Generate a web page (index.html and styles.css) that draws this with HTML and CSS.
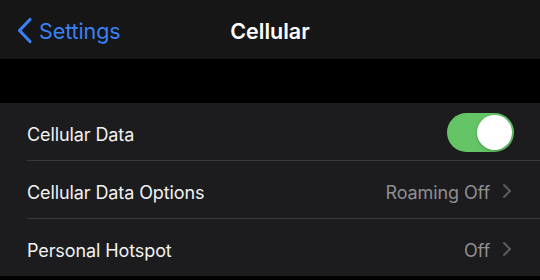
FILE: index.html
```html
<!DOCTYPE html>
<html>
<head>
<meta charset="utf-8">
<link rel="stylesheet" href="styles.css">
</head>
<body>
<div class="screen">
  <header class="nav">
    <div class="back">
      <svg class="back-chev" width="17" height="27" viewBox="0 0 17 27"><path d="M14 2.5 L3.5 13.5 L14 24.5" fill="none" stroke="#3a81f5" stroke-width="3.2" stroke-linecap="round" stroke-linejoin="round"/></svg>
      <span class="back-label">Settings</span>
    </div>
    <div class="title">Cellular</div>
    <div class="nav-right"></div>
  </header>
  <div class="gap"></div>
  <ul class="list">
    <li class="row">
      <div class="row-inner">
        <span class="label">Cellular Data</span>
        <span class="toggle"><span class="knob"></span></span>
      </div>
    </li>
    <li class="row">
      <div class="row-inner">
        <span class="label">Cellular Data Options</span>
        <span class="detail">Roaming Off<svg class="chev" width="10" height="16" viewBox="0 0 10 16"><path d="M2 2 L8 8 L2 14" fill="none" stroke="#5b5b60" stroke-width="2" stroke-linecap="round" stroke-linejoin="round"/></svg></span>
      </div>
    </li>
    <li class="row last">
      <div class="row-inner">
        <span class="label">Personal Hotspot</span>
        <span class="detail">Off<svg class="chev" width="10" height="16" viewBox="0 0 10 16"><path d="M2 2 L8 8 L2 14" fill="none" stroke="#5b5b60" stroke-width="2" stroke-linecap="round" stroke-linejoin="round"/></svg></span>
      </div>
    </li>
  </ul>
</div>
</body>
</html>
```
FILE: styles.css
```css
html, body {
  margin: 0;
  padding: 0;
  background: #000;
}
.screen {
  width: 540px;
  height: 280px;
  overflow: hidden;
  background: #000;
  font-family: Inter, "Noto Sans", sans-serif;
  -webkit-font-smoothing: antialiased;
}
.nav {
  height: 59px;
  box-sizing: border-box;
  padding-top: 3px;
  background: #161616;
  display: grid;
  grid-template-columns: 1fr auto 1fr;
  align-items: center;
}
.back {
  display: flex;
  align-items: center;
  padding-left: 16px;
  gap: 6px;
}
.back-chev {
  display: block;
  margin-top: -2px;
}
.back-label {
  color: #3a81f5;
  font-size: 21.5px;
  letter-spacing: -0.1px;
}
.title {
  color: #fff;
  font-size: 21.5px;
  font-weight: 600;
  letter-spacing: 0;
}
.gap {
  height: 44px;
}
.list {
  list-style: none;
  margin: 0;
  padding: 0;
  background: #1c1c1e;
}
.row {
  padding-left: 27px;
}
.row-inner {
  height: 57px;
  border-bottom: 1px solid #38383a;
  display: flex;
  align-items: center;
  justify-content: space-between;
  padding-right: 26px;
}
.row.last .row-inner {
  border-bottom: none;
}
.label {
  color: #f2f2f2;
  font-size: 18px;
  letter-spacing: -0.1px;
  padding-top: 5px;
}
.detail {
  color: #8e8e93;
  font-size: 18px;
  letter-spacing: -0.1px;
  display: flex;
  align-items: center;
  gap: 12px;
  margin-right: 2px;
  padding-top: 5px;
}
.chev {
  display: block;
  margin-top: -3px;
}
.toggle {
  width: 67px;
  height: 39px;
  border-radius: 20px;
  background: #65c466;
  display: flex;
  align-items: center;
  justify-content: flex-end;
  padding: 0 2px;
  box-sizing: border-box;
  margin-top: 2px;
}
.knob {
  width: 35px;
  height: 35px;
  border-radius: 50%;
  background: #fff;
  box-shadow: 0 1px 3px rgba(0,0,0,0.25);
}
```
